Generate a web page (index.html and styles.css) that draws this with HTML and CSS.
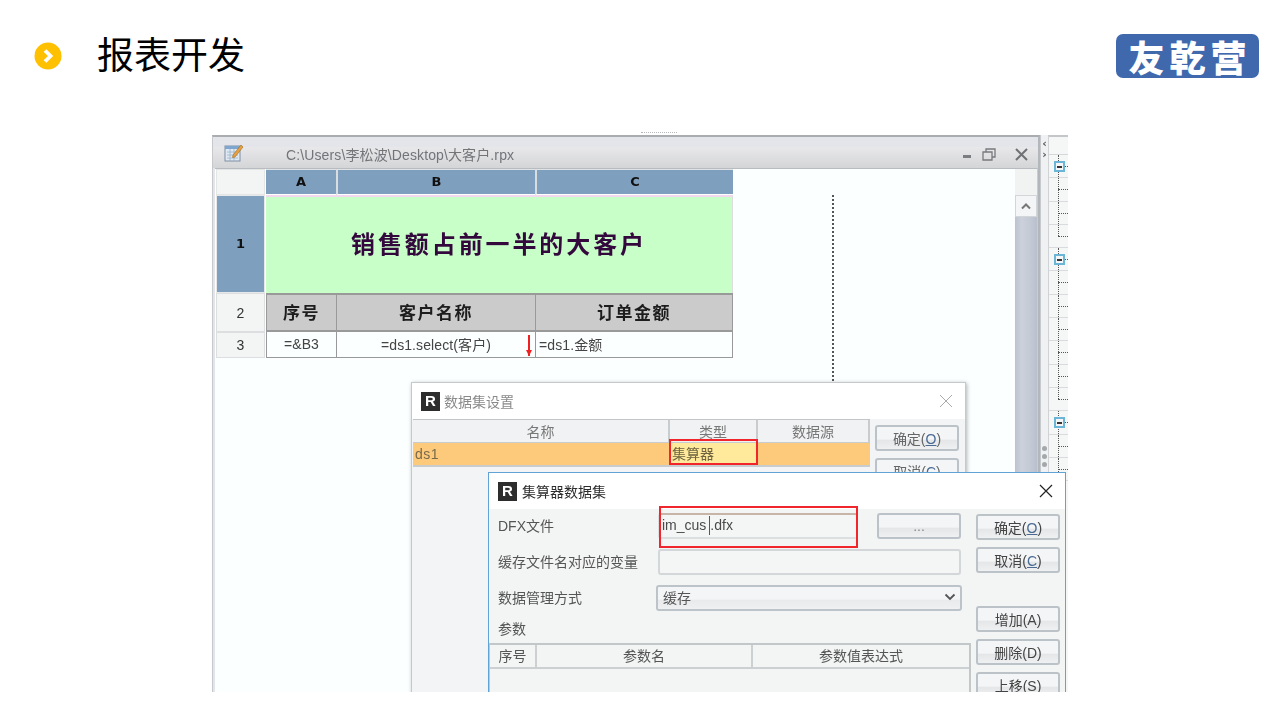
FILE: index.html
```html
<!DOCTYPE html>
<html lang="zh-CN">
<head>
<meta charset="utf-8">
<title>报表开发</title>
<link rel="stylesheet" href="styles.css">
</head>
<body>
<div class="slide">
  <header class="head">
    <svg class="bullet" width="28" height="28" viewBox="0 0 28 28"><circle cx="14" cy="14" r="13.5" fill="#ffc000"/><path d="M11 8.500 L16.500 14 L11 19.500" fill="none" stroke="#fff" stroke-width="3.800"/></svg>
    <h1 class="title">报表开发</h1>
    <div class="logo">友乾营</div>
  </header>
  <div class="grip"></div>

  <div class="shot">
    <section class="win">
      <div class="win-strip"></div>
      <div class="win-bar">
        <svg class="doc-icon" width="20" height="20" viewBox="0 0 20 20"><rect x="1" y="4" width="15" height="15" fill="#dfe9f3" stroke="#7d8fa5"/><rect x="1" y="4" width="15" height="3" fill="#7ea6cf"/><path d="M3 10h11M3 13h11M3 16h11M6 7v12M10 7v12" stroke="#9db3c9" stroke-width=".8"/><path d="M9 13 L17 3 L19 5 L11 15 L8.500 15.500Z" fill="#e8a13c" stroke="#9a6a24" stroke-width=".6"/></svg>
        <span class="win-path">C:\Users\李松波\Desktop\大客户.rpx</span>
        <span class="win-ctrls">
          <svg width="70" height="16" viewBox="0 0 70 16"><rect x="1" y="9" width="8" height="3" fill="#7b7d80"/><path d="M21 6h9v8h-9zM24 6V3h9v8h-3" fill="none" stroke="#77797c" stroke-width="1.300"/><path d="M54 3 L65 14 M65 3 L54 14" stroke="#6f7174" stroke-width="2"/></svg>
        </span>
      </div>
      <div class="win-body">
        <div class="sheet-wrap">
          <div class="sheet">
            <div class="corner"></div>
            <div class="col">A</div>
            <div class="col">B</div>
            <div class="col">C</div>
            <div class="row row-dark">1</div>
            <div class="banner">销售额占前一半的大客户</div>
            <div class="row">2</div>
            <div class="cell th">序号</div>
            <div class="cell th">客户名称</div>
            <div class="cell th end">订单金额</div>
            <div class="row">3</div>
            <div class="cell td">=&amp;B3</div>
            <div class="cell td">=ds1.select(客户)</div>
            <div class="cell td left end">=ds1.金额</div>
          </div>
        </div>
        <div class="vscroll">
          <div class="vs-corner"></div>
          <div class="vs-btn"><svg width="12" height="8" viewBox="0 0 12 8"><path d="M2 6.500 L6 2.500 L10 6.500" fill="none" stroke="#777" stroke-width="2"/></svg></div>
          <div class="vs-track"></div>
        </div>
      </div>
    </section>

    <div class="splitter">
      <span class="chev">‹</span><span class="chev">›</span>
      <span class="dots"><i></i><i></i><i></i></span>
    </div>

    <aside class="tree">
      <div class="tree-head"></div>
      <div class="tree-row open"><b></b></div><div class="tree-row"></div><div class="tree-row"></div><div class="tree-row last"></div>
      <div class="tree-row open"><b></b></div><div class="tree-row"></div><div class="tree-row"></div><div class="tree-row"></div><div class="tree-row"></div><div class="tree-row"></div><div class="tree-row last"></div>
      <div class="tree-row open"><b></b></div><div class="tree-row"></div><div class="tree-row"></div>
    </aside>

    <div class="page-guide"></div>
    <div class="arrow"></div>

    <section class="dlg dlg-back">
      <div class="dlg-title">
        <span class="r-icon">R</span><span class="dlg-name">数据集设置</span>
        <svg class="dlg-x" width="14" height="14" viewBox="0 0 14 14"><path d="M1 1 L13 13 M13 1 L1 13" stroke="#aaa" stroke-width="1"/></svg>
      </div>
      <div class="dlg-back-body">
        <div class="ds-table">
          <div class="ds-h">名称</div><div class="ds-h">类型</div><div class="ds-h">数据源</div>
          <div class="ds-c name">ds1</div><div class="ds-c sel">集算器</div><div class="ds-c"></div>
        </div>
        <div class="btn-col">
          <button class="btn dim">确定(<u>O</u>)</button>
          <button class="btn dim">取消(<u>C</u>)</button>
        </div>
      </div>
    </section>
    <div class="mark mark-type"></div>

    <section class="dlg dlg-front">
      <div class="dlg-title">
        <span class="r-icon">R</span><span class="dlg-name dark">集算器数据集</span>
        <svg class="dlg-x" width="14" height="14" viewBox="0 0 14 14"><path d="M1 1 L13 13 M13 1 L1 13" stroke="#222" stroke-width="1.200"/></svg>
      </div>
      <div class="front-body">
        <div class="form">
          <div class="f-row">
            <label class="f-label">DFX文件</label>
            <div class="f-split">
              <div class="f-input active">im_cus<span class="caret"></span>.dfx</div>
              <button class="btn dots-btn">...</button>
            </div>
          </div>
          <div class="f-row">
            <label class="f-label">缓存文件名对应的变量</label>
            <div class="f-input"></div>
          </div>
          <div class="f-row">
            <label class="f-label">数据管理方式</label>
            <div class="f-select"><span>缓存</span>
              <svg width="12" height="8" viewBox="0 0 12 8"><path d="M1.500 1.500 L6 6 L10.500 1.500" fill="none" stroke="#555" stroke-width="1.800"/></svg>
            </div>
          </div>
          <div class="f-sub">参数</div>
          <div class="param">
            <div class="p-h">序号</div><div class="p-h">参数名</div><div class="p-h">参数值表达式</div>
          </div>
        </div>
        <div class="side">
          <button class="btn">确定(<u>O</u>)</button>
          <button class="btn">取消(<u>C</u>)</button>
          <button class="btn far">增加(A)</button>
          <button class="btn">删除(D)</button>
          <button class="btn">上移(S)</button>
        </div>
      </div>
    </section>
    <div class="mark mark-file"></div>
  </div>
</div>
</body>
</html>
```
FILE: styles.css
```css
* { box-sizing: border-box; }
html, body { margin: 0; padding: 0; background: #fff; }
body { font-family: "Liberation Sans", "Noto Sans CJK SC", sans-serif; }
.slide { width: 1280px; height: 720px; overflow: hidden; display: flex; flex-direction: column; }

.head { height: 111px; flex: none; display: flex; align-items: center; padding: 0 21px 0 34px; }
.bullet { flex: none; }
.title { margin: 0 0 5px 35px; font: 400 37px/1.2 "Noto Sans CJK SC", sans-serif; color: #000; flex: 1; }
.logo { width: 143px; height: 44px; margin-top: 1px; background: #3f68ad; border-radius: 7px; color: #fff; text-align: center;
  font: 900 36px/44px "Noto Sans CJK SC", sans-serif; letter-spacing: 5px; padding-left: 5px; white-space: nowrap; }
.grip { flex: none; width: 36px; height: 3px; margin: 21px 0 0 641px; border-top: 1px dotted #b5b7ba; }

.shot { position: relative; flex: none; width: 856px; height: 557px; margin: 0 0 0 212px; overflow: hidden; background: #fff; filter: blur(.45px); color: #444; font-size: 14px; }

/* main window */
.win { position: absolute; left: 0; top: 0; width: 828px; height: 557px; display: flex; flex-direction: column; border-top: 2px solid #a9adb0; border-left: 1px solid #c6c9cc; border-right: 2px solid #b3b7bb; background: #e3e5ea; }
.win-strip { height: 10px; background: #e3e5ea; }
.win-bar { height: 21px; display: flex; align-items: center; padding: 0 8px 8px 11px; background: linear-gradient(#e8e8ea, #d4d5d7); }
.doc-icon { flex: none; margin-top: -4px; }
.win-path { margin-left: 42px; font-size: 14px; color: #727478; flex: 1; letter-spacing: .12px; }
.win-ctrls { display: flex; align-items: center; margin-right: -2px; }
.win-body { flex: 1; display: flex; margin: 0 0 0 2px; background: #fcffff; border-top: 1px solid #b8bbbf; min-height: 0; border-right: 1px solid #c9ccd0; }
.sheet-wrap { flex: 1; padding: 0 0 0 1px; }
.sheet { display: grid; grid-template-columns: 50px 70px 199px 198px; grid-template-rows: 26px 98px 39px 26px; width: 517px; }
.corner { background: #f3f5f4; border: 1px solid #e4e6e6; margin-right: 1px; }
.col { background: #7f9fbf; border: 1px solid #fff; border-left: 2px solid #d9dde0; border-top: 1px solid #dfe3e5; border-right-width: 0; color: #111; font: 700 13px/23px "DejaVu Sans", sans-serif; text-align: center; }
.col:nth-child(2) { border-left-width: 0; }
.row { background: #f3f4f4; border: 1px solid #dcdedf; color: #333; display: flex; align-items: center; justify-content: center; font-size: 14px; margin-right: 1px; }
.row-dark { background: #7f9fbf; border: 1px solid #e8e8ea; color: #111; font: 700 13px "DejaVu Sans", sans-serif; padding-bottom: 2px; }
.banner { grid-column: 2 / 5; background: #c8ffc8; border-top: 2px solid #f2d9ef; border-right: 1px solid #ddd; color: #33083c; font: 700 24px/92px "Noto Sans CJK SC", sans-serif; letter-spacing: 2.900px; text-align: center; }
.cell { display: flex; align-items: center; justify-content: center; border: 1px solid #999; border-right-width: 0; }
.cell.end { border-right-width: 1px; }
.th { background: #cbcbcb; border-top: 2px solid #999; border-bottom: 2px solid #999; color: #1d1d1d; font: 700 17px "Noto Sans CJK SC", sans-serif; letter-spacing: 1.500px; padding-bottom: 3px; }
.td { background: #fcffff; border-top: 0; color: #444; font-size: 14px; letter-spacing: .1px; padding-bottom: 1px; }
.left { justify-content: flex-start; padding-left: 3px; }
.vscroll { width: 22px; flex: none; display: flex; flex-direction: column; }
.vs-corner { height: 26px; background: #f1f3f3; }
.vs-btn { height: 22px; background: #f4f5f6; border: 1px solid #d3d6d9; display: flex; align-items: center; justify-content: center; }
.vs-track { flex: 1; background: linear-gradient(90deg, #bcc3d0, #ccd1db 30%, #c3c9d5 70%, #b9c0cd); }

.splitter { position: absolute; left: 828px; top: 0; width: 8px; height: 557px; background: #eff1f2; border-left: 1px solid #c7cacc; display: flex; flex-direction: column; align-items: center; gap: 2px; padding-top: 4px; }
.chev { font: 700 11px/9px "DejaVu Sans", sans-serif; color: #555; }
.dots { margin-top: 285px; display: flex; flex-direction: column; gap: 3px; }
.dots i { display: block; width: 5px; height: 5px; border-radius: 50%; background: #a5a8aa; }

.tree { position: absolute; left: 836px; top: 0; width: 20px; height: 557px; background: #f5f6f6; border-left: 1px solid #cfd3d6; border-top: 2px solid #c3c7ca; }
.tree-head { height: 18px; border-bottom: 1px solid #d5d8da; }
.tree-row { height: 23.300px; border-bottom: 1px solid #d9dcde; position: relative; }
.tree-row::before { content: ""; position: absolute; left: 9px; top: 0; bottom: 0; border-left: 1px dotted #555; }
.tree-row::after { content: ""; position: absolute; left: 9px; top: 11px; width: 10px; border-top: 1px dotted #555; }
.tree-row.last::before { bottom: 11px; }
.tree-row b { position: absolute; left: 5px; top: 6px; width: 11px; height: 11px; background: #f4f6f7; border: 2px solid #6bb6d6; z-index: 1; }
.tree-row b::after { content: ""; position: absolute; left: 1px; top: 2.500px; width: 5px; border-top: 2px solid #333; }

.page-guide { position: absolute; left: 620px; top: 60px; height: 190px; border-left: 2px dotted #555; }
.arrow { position: absolute; left: 316px; top: 200px; width: 2px; height: 21px; background: #ef2020; }
.arrow::after { content: ""; position: absolute; left: -2px; bottom: 0; border: 3px solid transparent; border-top: 6px solid #ef2020; border-bottom: 0; }

/* dialogs */
.dlg { position: absolute; background: #fff; display: flex; flex-direction: column; }
.dlg-title { height: 36px; flex: none; display: flex; align-items: center; padding: 0 12px 0 9px; }
.r-icon { width: 19px; height: 19px; flex: none; background: #2d2d2d; color: #fff; font: 900 15px/18px "Liberation Sans", sans-serif; text-align: center; }
.dlg-name { margin-left: 4px; flex: 1; font-size: 14px; color: #8a8a8a; }
.dlg-name.dark { color: #2c2c2c; margin-left: 5px; }
.dlg-x { flex: none; }

.dlg-back { left: 199px; top: 247px; width: 555px; height: 320px; border: 1px solid #c6c9cb; box-shadow: 1px 1px 4px rgba(0,0,0,.3); }
.dlg-back-body { flex: 1; background: #f3f4f5; display: flex; padding-left: 1px; }
.ds-table { width: 457px; display: grid; grid-template-columns: 257px 88px 112px; grid-template-rows: 23px 24px; align-content: start; border-top: 1px solid #c3c6c8; color: #777; }
.ds-h { text-align: center; line-height: 24px; background: #f1f2f3; border-right: 2px solid #c9ccce; border-bottom: 1px solid #c9ccce; font-size: 14px; }
.ds-c { background: #fdc97a; border-bottom: 2px solid #c9ccce; line-height: 22px; padding-left: 2px; font-size: 14px; color: #7a6a4a; }
.ds-c.name { letter-spacing: .5px; }
.ds-c.sel { background: #ffe99b; color: #6e6540; }
.btn-col { display: flex; flex-direction: column; gap: 7px; padding: 6px 0 0 5px; }

.btn { width: 84px; height: 26px; flex: none; padding: 0; border: 2px solid #bcc3c8; border-radius: 3px; background: linear-gradient(#f4f5f6 55%, #e4e6e8 60%, #eff0f1); color: #444; font: 14px "Liberation Sans", "Noto Sans CJK SC", sans-serif; }
.btn.dim { color: #666; }
.btn u { color: #4a6a94; }

.dlg-front { left: 276px; top: 337px; width: 578px; height: 240px; border: 1px solid #62a3d5; }
.front-body { flex: 1; background: #f3f4f4; display: flex; min-height: 0; }
.form { width: 482px; flex: none; padding-top: 4px; display: flex; flex-direction: column; }
.f-row { height: 26px; margin: 0 10px 10px 9px; display: flex; align-items: center; color: #555; }
.f-label { width: 160px; flex: none; font-size: 14px; white-space: nowrap; color: #555; margin-top: -2px; }
.f-split { flex: 1; display: flex; gap: 19px; }
.f-split .f-input { flex: 1; }
.f-input { flex: 1; height: 26px; border: 2px solid #dcdfe0; border-top-color: #c7b5aa; border-radius: 3px; background: #f4f5f5; padding: 0 0 2px 2px; font-size: 14px; line-height: 21px; color: #4a4a4a; display: flex; align-items: center; }
.f-row:nth-child(2) .f-input { border-color: #d3d7d9; }
.caret { display: inline-block; width: 1px; height: 19px; background: #4a5a6a; margin: 0 0 0 3px; }
.dots-btn { color: #888; width: 84px; line-height: 14px; }
.f-select { flex: 1; height: 26px; margin-left: -2px; margin-right: -1px; border: 2px solid #bdc4c9; border-radius: 3px; background: linear-gradient(#f4f5f6 55%, #e8eaeb 60%, #eff0f1); display: flex; align-items: center; justify-content: space-between; padding: 0 4px 2px 5px; font-size: 14px; color: #555; }
.f-sub { margin: -2px 0 0 9px; height: 20px; line-height: 20px; color: #555; font-size: 14px; }
.param { margin-top: 4px; flex: 1; display: grid; grid-template-columns: 47px 216px 1fr; grid-template-rows: 24px; border: 2px solid #c2c7ca; border-width: 2px 2px 0 2px; border-left-width: 1px; }
.p-h { text-align: center; background: #f3f4f4; line-height: 22px; border-right: 2px solid #ccd0d2; border-bottom: 2px solid #ccd0d2; color: #555; font-size: 14px; }
.p-h:last-child { border-right: 0; }
.side { display: flex; flex-direction: column; gap: 7px; padding: 5px 0 0 5px; }
.side .far { margin-top: 26px; }

.mark { position: absolute; border: 2px solid #f0262c; }
.mark-type { left: 457px; top: 304px; width: 89px; height: 26px; }
.mark-file { left: 447px; top: 371px; width: 199px; height: 42px; }
```
